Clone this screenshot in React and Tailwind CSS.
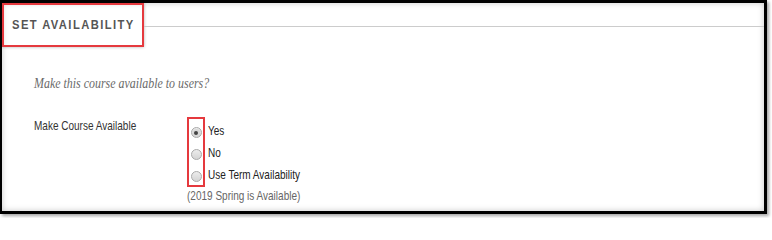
export default function App() {
  const options = [
    { label: "Yes", checked: true },
    { label: "No", checked: false },
    { label: "Use Term Availability", checked: false },
  ];

  return (
    <div className="w-[772px] h-[218px] bg-white overflow-hidden">
      {/* Screenshot frame */}
      <div className="w-[767px] h-[214px] bg-white border-black border-t-[3px] border-l-2 border-r-[3px] border-b-[3px] shadow-[inset_0_0_6px_rgba(0,0,0,0.22),2px_2px_3px_rgba(0,0,0,0.35)]">
        {/* Section header */}
        <div className="flex items-center">
          <div className="h-[44px] w-[142px] shrink-0 flex items-center pl-[8px] border-2 border-[#e5393e] shadow-[0_0_3px_rgba(0,0,0,0.3)]">
            <span
              className="inline-block origin-left scale-x-[0.83] whitespace-nowrap text-[13.5px] font-bold tracking-[1.7px] text-[#555] leading-none"
              style={{ fontFamily: '"Liberation Sans", Arial, sans-serif' }}
            >
              SET AVAILABILITY
            </span>
          </div>
          <div className="flex-1 h-px mt-[2px] bg-[#cccccc]" />
        </div>

        <div className="pl-[32px]" style={{ fontFamily: '"Liberation Sans", Arial, sans-serif' }}>
          <p className="mt-[26px] leading-[20px]">
            <span
              className="inline-block origin-left scale-x-[0.795] whitespace-nowrap italic text-[15px] text-[#6a6a6a]"
              style={{ fontFamily: '"Liberation Serif", Georgia, serif' }}
            >
              Make this course available to users?
            </span>
          </p>

          <div className="mt-[24px] flex items-start">
            <div className="w-[153px] shrink-0 leading-[16px]">
              <span className="inline-block origin-left scale-x-[0.77] whitespace-nowrap text-[13px] text-[#333]">
                Make Course Available
              </span>
            </div>

            <div className="flex flex-col">
              <div className="flex">
                {/* radios, highlighted */}
                <div className="w-[18px] border-2 border-[#e5393e] flex flex-col">
                  {options.map((o) => (
                    <div key={o.label} className="h-[22px] flex items-end justify-center pb-[3px]">
                      <span className="w-[11px] h-[11px] rounded-full border border-[#a9a9a9] bg-gradient-to-b from-[#ececec] to-[#d4d4d4] flex items-center justify-center">
                        {o.checked && (
                          <span className="w-[7px] h-[7px] rounded-full bg-[#d9d9d9] flex items-center justify-center">
                            <span className="w-[4px] h-[4px] rounded-full bg-[#444]" />
                          </span>
                        )}
                      </span>
                    </div>
                  ))}
                </div>
                <div className="ml-[3px] flex flex-col pt-[2px]">
                  {options.map((o) => (
                    <div key={o.label} className="h-[22px] leading-[22px]">
                      <span className="inline-block origin-left scale-x-[0.77] whitespace-nowrap text-[13px] text-[#222]">
                        {o.label}
                      </span>
                    </div>
                  ))}
                </div>
              </div>
              <div className="leading-[16px]">
                <span className="inline-block origin-left scale-x-[0.77] whitespace-nowrap text-[13px] text-[#666]">
                  (2019 Spring is Available)
                </span>
              </div>
            </div>
          </div>
        </div>
      </div>
    </div>
  );
}
